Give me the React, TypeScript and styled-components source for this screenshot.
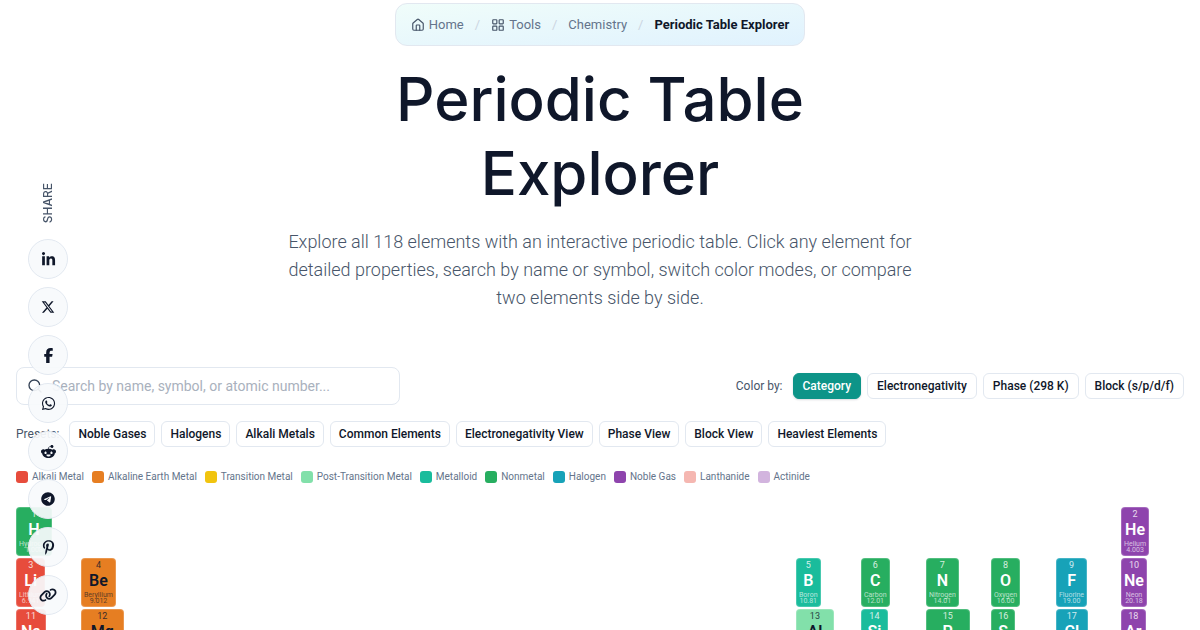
import React from 'react';
import styled, { createGlobalStyle } from 'styled-components';
import { House, LayoutGrid, Search } from 'lucide-react';
import {
  FaFacebookF,
  FaLink,
  FaLinkedinIn,
  FaPinterestP,
  FaRedditAlien,
  FaTelegram,
  FaWhatsapp,
  FaXTwitter,
} from 'react-icons/fa6';

const GlobalStyle = createGlobalStyle`
  *, *::before, *::after { box-sizing: border-box; }
  body {
    margin: 0;
    background: #ffffff;
    color: #0f172a;
    font-family: Roboto, "Liberation Sans", sans-serif;
  }
  button, input { font-family: inherit; }
`;

const Page = styled.main`
  display: flex;
  flex-direction: column;
  padding: 3px 16px 24px;
`;

const Breadcrumb = styled.nav`
  align-self: center;
  padding: 12px 15px;
  border: 1px solid #e2e8f0;
  border-radius: 12px;
  background: linear-gradient(to bottom right, #f0fdfa 0%, #e0f2fe 100%);
  font-size: 13px;
  line-height: 17px;
`;

const Crumbs = styled.ol`
  display: flex;
  gap: 11px;
  margin: 0;
  padding: 0;
  list-style: none;
`;

const Crumb = styled.li`
  display: flex;
  align-items: center;
  gap: 11px;

  &:not(:last-child)::after {
    content: '/';
    color: #cbd5e1;
  }
`;

const CrumbLink = styled.a`
  display: flex;
  align-items: center;
  gap: 4px;
  color: #64748b;
  text-decoration: none;

  svg { color: #475569; }
`;

const CurrentCrumb = styled.span`
  color: #0f172a;
  font-weight: 700;
`;

const Intro = styled.header`
  align-self: center;
  max-width: 640px;
  margin: 16px 0 55px;
  text-align: center;
`;

const Title = styled.h1`
  margin: 0 0 18px;
  font-family: Inter, "Liberation Sans", sans-serif;
  font-size: 60px;
  font-weight: 500;
  line-height: 74px;
`;

const Lead = styled.p`
  margin: 0;
  color: #475569;
  font-size: 18px;
  font-weight: 300;
  line-height: 28px;
`;

const Toolbar = styled.div`
  display: flex;
  align-items: center;
  justify-content: space-between;
  gap: 16px;
  margin-bottom: 16px;
`;

const SearchBox = styled.label`
  display: flex;
  align-items: center;
  gap: 9px;
  flex: 0 1 384px;
  height: 38px;
  padding: 0 10px;
  border: 1px solid #e2e8f0;
  border-radius: 8px;
  color: #334155;
`;

const SearchInput = styled.input`
  flex: 1;
  min-width: 0;
  padding: 0;
  border: 0;
  outline: 0;
  background: transparent;
  color: #0f172a;
  font-size: 14px;

  &::placeholder { color: #a9b1bd; opacity: 1; }
`;

const ButtonGroup = styled.div`
  display: flex;
  flex-wrap: wrap;
  align-items: center;
  gap: 6px;
`;

const GroupLabel = styled.span`
  margin-right: 4px;
  color: #475569;
  font-size: 12px;
`;

const Chip = styled.button<{ $wide?: boolean; $active?: boolean }>`
  height: 26px;
  padding: 0 ${(p) => (p.$wide ? 9 : 8)}px;
  border: 1px solid ${(p) => (p.$active ? '#0d9488' : '#e2e8f0')};
  border-radius: 6px;
  background: ${(p) => (p.$active ? '#0d9488' : '#ffffff')};
  box-shadow: ${(p) => (p.$active ? '0 1px 2px rgba(15, 23, 42, 0.15)' : 'none')};
  color: ${(p) => (p.$active ? '#ffffff' : '#0f172a')};
  font-size: 12px;
  font-weight: 500;
  white-space: nowrap;
  cursor: pointer;
`;

const Legend = styled.ul`
  display: flex;
  flex-wrap: wrap;
  gap: 8px;
  margin: 24px 0;
  padding: 0;
  color: #64748b;
  font-size: 10px;
  line-height: 12px;
  list-style: none;
`;

const LegendItem = styled.li`
  display: flex;
  align-items: center;
  gap: 4px;
`;

const Swatch = styled.span<{ $color: string }>`
  width: 12px;
  height: 12px;
  border-radius: 3px;
  background: ${(p) => p.$color};
`;

const ElementGrid = styled.section`
  display: grid;
  grid-template-columns: repeat(18, minmax(0, 1fr));
  gap: 2px;
`;

const ElementCell = styled.button<{ $color: string; $dark: boolean; $column: number; $row: number }>`
  grid-column: ${(p) => p.$column};
  grid-row: ${(p) => p.$row};
  justify-self: start;
  display: flex;
  flex-direction: column;
  align-items: center;
  height: 49px;
  padding: 2px;
  border: 1px solid rgba(255, 255, 255, 0.2);
  border-radius: 4px;
  background: ${(p) => p.$color};
  color: ${(p) => (p.$dark ? '#0f172a' : '#ffffff')};
  cursor: pointer;
`;

const AtomicNumber = styled.span`
  font-size: 9px;
  line-height: 9px;
  opacity: 0.8;
`;

const ElementSymbol = styled.span`
  font-size: 16px;
  font-weight: 600;
  line-height: 22px;
`;

const Detail = styled.span`
  font-size: 7px;
  line-height: 6px;
  opacity: 0.65;
`;

const ShareRail = styled.aside`
  position: fixed;
  top: 183px;
  left: 28px;
  z-index: 10;
  display: flex;
  flex-direction: column;
  align-items: center;
  gap: 8px;
`;

const ShareLabel = styled.span`
  margin-bottom: 8px;
  color: #475569;
  font-family: Inter, "Liberation Sans", sans-serif;
  font-size: 12px;
  font-weight: 500;
  line-height: 16px;
  writing-mode: vertical-rl;
  transform: rotate(180deg);
`;

const ShareLink = styled.a`
  display: flex;
  align-items: center;
  justify-content: center;
  width: 40px;
  height: 40px;
  border: 1px solid #e2e8f0;
  border-radius: 50%;
  background: rgba(248, 250, 252, 0.93);
  color: #0f172a;
`;

const colors = {
  alkali: '#e74c3c',
  alkaline: '#e67e22',
  transition: '#f1c40f',
  postTransition: '#82e0aa',
  metalloid: '#1abc9c',
  nonmetal: '#27ae60',
  halogen: '#17a2b8',
  noble: '#8e44ad',
  lanthanide: '#f5b7b1',
  actinide: '#d2b4de',
};

type Category = keyof typeof colors;

const legend: [Category, string][] = [
  ['alkali', 'Alkali Metal'],
  ['alkaline', 'Alkaline Earth Metal'],
  ['transition', 'Transition Metal'],
  ['postTransition', 'Post-Transition Metal'],
  ['metalloid', 'Metalloid'],
  ['nonmetal', 'Nonmetal'],
  ['halogen', 'Halogen'],
  ['noble', 'Noble Gas'],
  ['lanthanide', 'Lanthanide'],
  ['actinide', 'Actinide'],
];

const darkText: Category[] = ['alkaline', 'transition', 'postTransition', 'lanthanide', 'actinide'];

// number, symbol, name, mass, category, column, row
const elements: [number, string, string, string, Category, number, number][] = [
  [1, 'H', 'Hydrogen', '1.008', 'nonmetal', 1, 1],
  [2, 'He', 'Helium', '4.003', 'noble', 18, 1],
  [3, 'Li', 'Lithium', '6.941', 'alkali', 1, 2],
  [4, 'Be', 'Beryllium', '9.012', 'alkaline', 2, 2],
  [5, 'B', 'Boron', '10.81', 'metalloid', 13, 2],
  [6, 'C', 'Carbon', '12.01', 'nonmetal', 14, 2],
  [7, 'N', 'Nitrogen', '14.01', 'nonmetal', 15, 2],
  [8, 'O', 'Oxygen', '16.00', 'nonmetal', 16, 2],
  [9, 'F', 'Fluorine', '19.00', 'halogen', 17, 2],
  [10, 'Ne', 'Neon', '20.18', 'noble', 18, 2],
  [11, 'Na', 'Sodium', '22.99', 'alkali', 1, 3],
  [12, 'Mg', 'Magnesium', '24.31', 'alkaline', 2, 3],
  [13, 'Al', 'Aluminum', '26.98', 'postTransition', 13, 3],
  [14, 'Si', 'Silicon', '28.09', 'metalloid', 14, 3],
  [15, 'P', 'Phosphorus', '30.97', 'nonmetal', 15, 3],
  [16, 'S', 'Sulfur', '32.07', 'nonmetal', 16, 3],
  [17, 'Cl', 'Chlorine', '35.45', 'halogen', 17, 3],
  [18, 'Ar', 'Argon', '39.95', 'noble', 18, 3],
];

const colorModes = ['Category', 'Electronegativity', 'Phase (298 K)', 'Block (s/p/d/f)'];

const presets = [
  'Noble Gases',
  'Halogens',
  'Alkali Metals',
  'Common Elements',
  'Electronegativity View',
  'Phase View',
  'Block View',
  'Heaviest Elements',
];

const shareTargets = [
  { name: 'LinkedIn', Icon: FaLinkedinIn, size: 15 },
  { name: 'X', Icon: FaXTwitter, size: 14 },
  { name: 'Facebook', Icon: FaFacebookF, size: 15 },
  { name: 'WhatsApp', Icon: FaWhatsapp, size: 15 },
  { name: 'Reddit', Icon: FaRedditAlien, size: 15 },
  { name: 'Telegram', Icon: FaTelegram, size: 14 },
  { name: 'Pinterest', Icon: FaPinterestP, size: 15 },
  { name: 'Copy link', Icon: FaLink, size: 18 },
];

export default function App() {
  const [mode, setMode] = React.useState(colorModes[0]);
  return (
    <>
      <GlobalStyle />
      <ShareRail aria-label="Share this page">
        <ShareLabel>SHARE</ShareLabel>
        {shareTargets.map(({ name, Icon, size }) => (
          <ShareLink key={name} href="#" aria-label={name}>
            <Icon size={size} />
          </ShareLink>
        ))}
      </ShareRail>
      <Page>
        <Breadcrumb aria-label="Breadcrumb">
          <Crumbs>
            <Crumb>
              <CrumbLink href="#">
                <House size={14} />
                Home
              </CrumbLink>
            </Crumb>
            <Crumb>
              <CrumbLink href="#">
                <LayoutGrid size={14} />
                Tools
              </CrumbLink>
            </Crumb>
            <Crumb>
              <CrumbLink href="#">Chemistry</CrumbLink>
            </Crumb>
            <Crumb>
              <CurrentCrumb aria-current="page">Periodic Table Explorer</CurrentCrumb>
            </Crumb>
          </Crumbs>
        </Breadcrumb>

        <Intro>
          <Title>Periodic Table Explorer</Title>
          <Lead>
            Explore all 118 elements with an interactive periodic table. Click any element for
            detailed properties, search by name or symbol, switch color modes, or compare two
            elements side by side.
          </Lead>
        </Intro>

        <Toolbar>
          <SearchBox>
            <Search size={16} aria-hidden />
            <SearchInput
              type="text"
              aria-label="Search elements"
              placeholder="Search by name, symbol, or atomic number..."
            />
          </SearchBox>
          <ButtonGroup>
            <GroupLabel>Color by:</GroupLabel>
            {colorModes.map((name) => (
              <Chip key={name} type="button" $wide $active={name === mode} onClick={() => setMode(name)}>
                {name}
              </Chip>
            ))}
          </ButtonGroup>
        </Toolbar>

        <ButtonGroup>
          <GroupLabel>Presets:</GroupLabel>
          {presets.map((name) => (
            <Chip key={name} type="button">
              {name}
            </Chip>
          ))}
        </ButtonGroup>

        <Legend>
          {legend.map(([category, name]) => (
            <LegendItem key={category}>
              <Swatch $color={colors[category]} />
              {name}
            </LegendItem>
          ))}
        </Legend>

        <ElementGrid aria-label="Periodic table">
          {elements.map(([number, symbol, name, mass, category, column, row]) => (
            <ElementCell
              key={number}
              type="button"
              $color={colors[category]}
              $dark={darkText.includes(category)}
              $column={column}
              $row={row}
            >
              <AtomicNumber>{number}</AtomicNumber>
              <ElementSymbol>{symbol}</ElementSymbol>
              <Detail>{name}</Detail>
              <Detail>{mass}</Detail>
            </ElementCell>
          ))}
        </ElementGrid>
      </Page>
    </>
  );
}
